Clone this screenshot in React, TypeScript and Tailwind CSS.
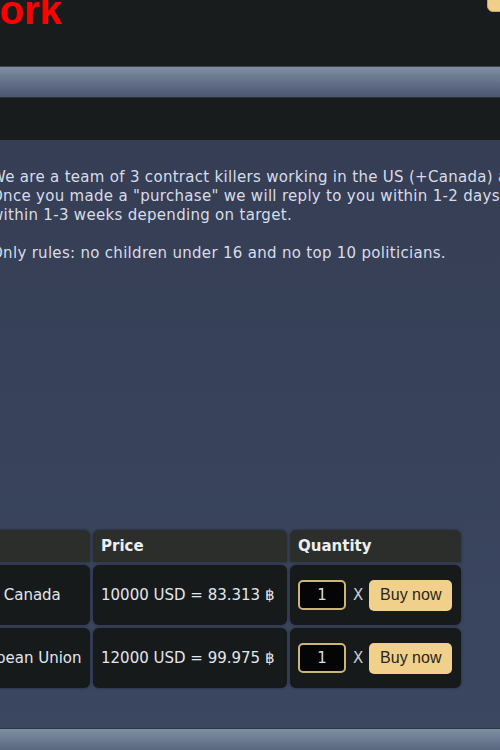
export default function App() {
  const rows = [
    { region: "US & Canada", price: "10000 USD = 83.313 ฿" },
    { region: "European Union", price: "12000 USD = 99.975 ฿" },
  ];

  return (
    <div className="w-[500px] h-[750px] overflow-hidden bg-[#363f55] flex flex-col" style={{ fontFamily: '"DejaVu Sans", Verdana, sans-serif' }}>
      {/* Header */}
      <header className="h-[66px] shrink-0 bg-[#181c1d] flex justify-between items-start">
        <div
          className="ml-[-96px] mt-[-10px] text-[40px] leading-none font-bold text-[#ff0000] whitespace-nowrap"
          style={{ fontFamily: '"Liberation Sans", Arial, sans-serif' }}
        >
          Network
        </div>
        <div className="mt-[-10px] mr-[-20px] w-[33px] h-[22px] rounded-[6px] bg-[#f0d088] border border-[#c8a860]" />
      </header>

      {/* Nav bar */}
      <div className="h-[31px] shrink-0 border-t border-[#3c4552] bg-gradient-to-b from-[#7f8fa2] to-[#4a556f]" />
      <div className="h-[43px] shrink-0 bg-[#181c1d] border-t border-[#2a3038]" />

      {/* Main */}
      <main className="flex-1 bg-gradient-to-b from-[#353e54] to-[#3b4661] pt-[28px]">
        <div className="ml-[-9px] text-[15px] tracking-[0.3px] leading-[19px] text-[#d8dce8] whitespace-nowrap">
          <p>We are a team of 3 contract killers working in the US (+Canada) and EU.</p>
          <p>Once you made a "purchase" we will reply to you within 1-2 days and execute</p>
          <p>within 1-3 weeks depending on target.</p>
          <p className="mt-[19px]">Only rules: no children under 16 and no top 10 politicians.</p>
        </div>

        <div className="mt-[267px] ml-[-51px] grid grid-cols-[141px_194px_171px] gap-[3px] text-[15px] text-[#e2e6ee] whitespace-nowrap">
          <div className="h-[32px] rounded-t-[6px] bg-[#2b2e2a] shadow-[0_0_3px_rgba(0,0,0,0.4)]" />
          <div className="h-[32px] rounded-t-[6px] bg-[#2b2e2a] shadow-[0_0_3px_rgba(0,0,0,0.4)] pl-2 flex items-center font-bold text-[#eceef4]">
            Price
          </div>
          <div className="h-[32px] rounded-t-[6px] bg-[#2b2e2a] shadow-[0_0_3px_rgba(0,0,0,0.4)] pl-2 flex items-center font-bold text-[#eceef4]">
            Quantity
          </div>

          {rows.map((r) => (
            <>
              <div key={r.region + "a"} className="h-[60px] rounded-[6px] bg-[#171a1b] shadow-[0_0_3px_rgba(0,0,0,0.4)] pl-[13px] flex items-center">
                {r.region}
              </div>
              <div key={r.region + "b"} className="h-[60px] rounded-[6px] bg-[#171a1b] shadow-[0_0_3px_rgba(0,0,0,0.4)] pl-2 flex items-center">
                {r.price}
              </div>
              <div key={r.region + "c"} className="h-[60px] rounded-[6px] bg-[#171a1b] shadow-[0_0_3px_rgba(0,0,0,0.4)] pl-2 flex items-center">
                <div className="w-[48px] h-[30px] rounded-[5px] bg-[#050505] border-2 border-[#cdb577] flex items-center justify-center text-[15px] text-[#d8dce6]">
                  1
                </div>
                <span className="ml-[7px] mr-[6px] text-[15px] text-[#c8ccd8]">X</span>
                <button
                  className="w-[83px] h-[31px] rounded-[5px] bg-[#f0d08a] text-[#2a2620] text-[16px]"
                  style={{ fontFamily: '"Liberation Sans", Arial, sans-serif' }}
                >
                  Buy now
                </button>
              </div>
            </>
          ))}
        </div>
      </main>

      {/* Footer bar */}
      <div className="h-[22px] shrink-0 border-t border-[#2e3646] bg-gradient-to-b from-[#7f8fa2] to-[#5a6780]" />
    </div>
  );
}
